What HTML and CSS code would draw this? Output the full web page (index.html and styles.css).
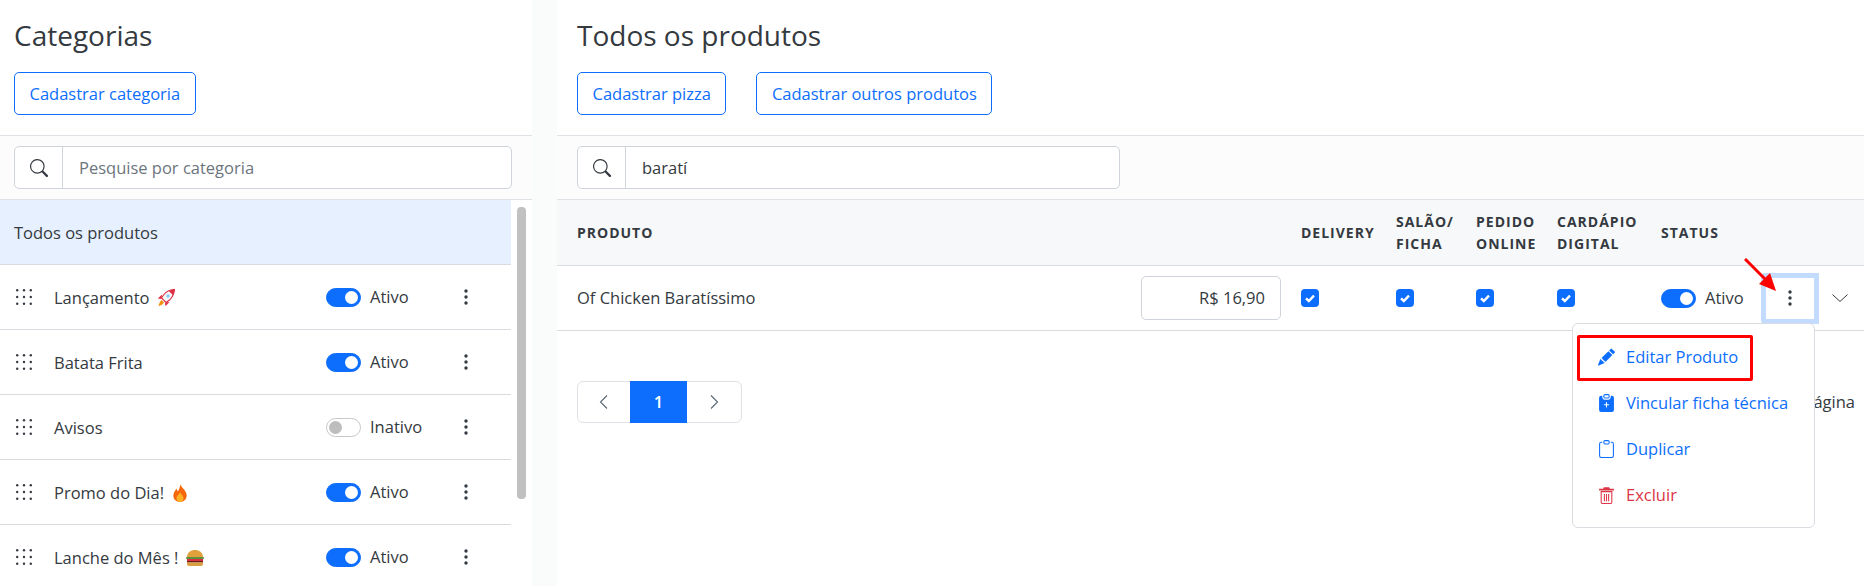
FILE: index.html
```html
<!DOCTYPE html>
<html lang="pt-BR">

<head>
    <meta charset="UTF-8">
    <title>Produtos</title>
    <link rel="stylesheet" href="styles.css">
</head>

<body>
    <svg class="sprite" xmlns="http://www.w3.org/2000/svg">
        <symbol id="i-search" viewBox="0 0 16 16">
            <path d="M11.742 10.344a6.5 6.5 0 1 0-1.397 1.398h-.001c.03.04.062.078.098.115l3.85 3.85a1 1 0 0 0 1.415-1.414l-3.85-3.85a1.007 1.007 0 0 0-.115-.1zM12 6.5a5.5 5.5 0 1 1-11 0 5.5 5.5 0 0 1 11 0z" />
        </symbol>
        <symbol id="i-grip" viewBox="0 0 16 16">
            <circle cx="1.2" cy="1.2" r="1.2" /><circle cx="8" cy="1.2" r="1.2" /><circle cx="14.8" cy="1.2" r="1.2" />
            <circle cx="1.2" cy="8" r="1.2" /><circle cx="8" cy="8" r="1.2" /><circle cx="14.8" cy="8" r="1.2" />
            <circle cx="1.2" cy="14.8" r="1.2" /><circle cx="8" cy="14.8" r="1.2" /><circle cx="14.8" cy="14.8" r="1.2" />
        </symbol>
        <symbol id="i-kebab" viewBox="0 0 4 16">
            <circle cx="2" cy="2" r="1.700" /><circle cx="2" cy="8" r="1.700" /><circle cx="2" cy="14" r="1.700" />
        </symbol>
        <symbol id="i-check" viewBox="0 0 18 18">
            <rect width="18" height="18" rx="4" fill="#0d6efd" />
            <path d="M5 9.4l2.8 2.6L13 6.6" fill="none" stroke="#fff" stroke-width="2.4" />
        </symbol>
    </svg>

    <div class="app">
        <!-- categorias -->
        <aside class="side">
            <div class="top">
                <h3>Categorias</h3>
                <div class="actions">
                    <a href="#" class="btn">Cadastrar categoria</a>
                </div>
            </div>
            <div class="filter">
                <div class="search">
                    <span class="search-ico"><svg><use href="#i-search" /></svg></span>
                    <input type="text" placeholder="Pesquise por categoria">
                </div>
            </div>
            <div class="list-wrap">
                <ul class="list">
                    <li class="cat cat-all"><span class="cat-label">Todos os produtos</span></li>
                    <li class="cat">
                        <svg class="grip"><use href="#i-grip" /></svg>
                        <span class="cat-name">Lançamento
                            <svg class="emoji" viewBox="0 0 18 18">
                                <path d="M17.500.5c-4.500.2-8 2-10.500 5L4.500 9l4.500 4.500 3.500-2.500c3-2.700 4.500-6 5-10.500z" fill="#f5f8fa" stroke="#dd2e44" stroke-width="1.100" />
                                <path d="M17.500.5c-2.200.1-4 .6-5.700 1.500l4.200 4.200c.8-1.700 1.300-3.500 1.500-5.700z" fill="#dd2e44" />
                                <circle cx="11" cy="7" r="1.700" fill="#88c9f9" />
                                <path d="M5 5.500L.8 9.500l3.700.5zM12.500 13l-4 4.200-.5-3.700z" fill="#dd2e44" />
                                <path d="M4.500 11l2.500 2.500c-1 1.800-3 3-5.500 3.500.5-2.500 1.500-4.500 3-6z" fill="#f4900c" />
                            </svg>
                        </span>
                        <span class="switch on"></span>
                        <span class="state">Ativo</span>
                        <svg class="kebab"><use href="#i-kebab" /></svg>
                    </li>
                    <li class="cat">
                        <svg class="grip"><use href="#i-grip" /></svg>
                        <span class="cat-name">Batata Frita</span>
                        <span class="switch on"></span>
                        <span class="state">Ativo</span>
                        <svg class="kebab"><use href="#i-kebab" /></svg>
                    </li>
                    <li class="cat">
                        <svg class="grip"><use href="#i-grip" /></svg>
                        <span class="cat-name">Avisos</span>
                        <span class="switch"></span>
                        <span class="state">Inativo</span>
                        <svg class="kebab"><use href="#i-kebab" /></svg>
                    </li>
                    <li class="cat">
                        <svg class="grip"><use href="#i-grip" /></svg>
                        <span class="cat-name">Promo do Dia!
                            <svg class="emoji" viewBox="0 0 14 18">
                                <path d="M7 0c.6 3 5.800 5.600 6.600 10.500C14.200 15 11 18 7 18s-7-3-6.600-7C.7 8 2.500 6.500 3.300 4.800 4.200 6 4.500 6.800 4.800 7.500 6 5.500 7.300 3 7 0z" fill="#f4680b" />
                                <path d="M7 8c.5 2 3.500 3.500 3.500 6.300C10.500 16.500 9 18 7 18s-3.500-1.500-3.500-3.700C3.500 11.500 6.500 10.500 7 8z" fill="#fdb022" />
                            </svg>
                        </span>
                        <span class="switch on"></span>
                        <span class="state">Ativo</span>
                        <svg class="kebab"><use href="#i-kebab" /></svg>
                    </li>
                    <li class="cat">
                        <svg class="grip"><use href="#i-grip" /></svg>
                        <span class="cat-name">Lanche do Mês !
                            <svg class="emoji" viewBox="0 0 18 16">
                                <path d="M1 7C1 2.500 5 0 9 0s8 2.500 8 7z" fill="#e0a13c" />
                                <rect x="0" y="7" width="18" height="2" rx="1" fill="#5c913b" />
                                <rect x="1" y="9" width="16" height="2" fill="#dd2e44" />
                                <rect x="1" y="11" width="16" height="1.500" fill="#662113" />
                                <path d="M1 12.500h16V14c0 1-1 2-2 2H3c-1 0-2-1-2-2z" fill="#d99e3f" />
                            </svg>
                        </span>
                        <span class="switch on"></span>
                        <span class="state">Ativo</span>
                        <svg class="kebab"><use href="#i-kebab" /></svg>
                    </li>
                </ul>
                <div class="scroll-track"><div class="scroll-thumb"></div></div>
            </div>
        </aside>

        <!-- produtos -->
        <main class="content">
            <div class="top">
                <h3>Todos os produtos</h3>
                <div class="actions">
                    <a href="#" class="btn">Cadastrar pizza</a>
                    <a href="#" class="btn">Cadastrar outros produtos</a>
                </div>
            </div>
            <div class="filter">
                <div class="search search-prod">
                    <span class="search-ico"><svg><use href="#i-search" /></svg></span>
                    <input type="text" value="baratí">
                </div>
            </div>

            <div class="grid grid-head">
                <div>PRODUTO</div>
                <div>DELIVERY</div>
                <div>SALÃO/<br>FICHA</div>
                <div>PEDIDO<br>ONLINE</div>
                <div>CARDÁPIO<br>DIGITAL</div>
                <div>STATUS</div>
            </div>
            <div class="grid grid-row">
                <div class="prod">
                    <span>Of Chicken Baratíssimo</span>
                    <span class="price">R$ 16,90</span>
                </div>
                <svg class="check"><use href="#i-check" /></svg>
                <svg class="check"><use href="#i-check" /></svg>
                <svg class="check"><use href="#i-check" /></svg>
                <svg class="check"><use href="#i-check" /></svg>
                <div class="status">
                    <span class="switch on"></span>
                    <span class="state">Ativo</span>
                </div>
                <div class="row-end">
                    <span class="more"><svg class="kebab"><use href="#i-kebab" /></svg></span>
                    <svg class="chev" viewBox="0 0 16 16"><path d="M.5 4.500L8 11.500l7.500-7" fill="none" stroke="#343a40" stroke-width="1" /></svg>
                </div>
            </div>

            <div class="foot">
                <div class="pager">
                    <a href="#"><svg viewBox="0 0 16 16"><path d="M11 1.500L4.500 8l6.500 6.500" /></svg></a>
                    <a href="#" class="active">1</a>
                    <a href="#"><svg viewBox="0 0 16 16"><path d="M5 1.500L11.500 8 5 14.500" /></svg></a>
                </div>
                <span class="per-page">ágina</span>
            </div>

            <!-- menu aberto -->
            <ul class="menu">
                <li>
                    <svg viewBox="0 0 16 16"><path d="M12.854.146a.5.5 0 0 0-.707 0L10.500 1.793 14.207 5.500l1.647-1.646a.5.5 0 0 0 0-.708l-3-3zm.646 6.061L9.793 2.500 3.293 9H3.500a.5.5 0 0 1 .5.5v.5h.5a.5.5 0 0 1 .5.5v.5h.5a.5.5 0 0 1 .5.5v.5h.5a.5.5 0 0 1 .5.5v.207l6.500-6.500zm-7.468 7.468A.5.5 0 0 1 6 13.500V13h-.5a.5.5 0 0 1-.5-.5V12h-.5a.5.5 0 0 1-.5-.5V11h-.5a.5.5 0 0 1-.5-.5V10h-.5a.499.499 0 0 1-.175-.032l-.179.178a.5.5 0 0 0-.11.168l-2 5a.5.5 0 0 0 .65.65l5-2a.5.5 0 0 0 .168-.11l.178-.178z" /></svg>
                    Editar Produto
                </li>
                <li>
                    <svg viewBox="0 0 16 16" preserveAspectRatio="none"><path d="M6.500 0A1.500 1.500 0 0 0 5 1.500v1A1.500 1.500 0 0 0 6.500 4h3A1.500 1.500 0 0 0 11 2.500v-1A1.500 1.500 0 0 0 9.500 0h-3Zm3 1a.5.5 0 0 1 .5.5v1a.5.5 0 0 1-.5.5h-3a.5.5 0 0 1-.5-.5v-1a.5.5 0 0 1 .5-.5h3Z" /><path d="M4 1.500H3a2 2 0 0 0-2 2V14a2 2 0 0 0 2 2h10a2 2 0 0 0 2-2V3.500a2 2 0 0 0-2-2h-1v1A2.500 2.500 0 0 1 9.500 5h-3A2.500 2.500 0 0 1 4 2.500v-1Zm4.500 6V9H10a.5.5 0 0 1 0 1H8.500v1.500a.5.5 0 0 1-1 0V10H6a.5.5 0 0 1 0-1h1.500V7.500a.5.5 0 0 1 1 0Z" /></svg>
                    Vincular ficha técnica
                </li>
                <li>
                    <svg viewBox="0 0 16 16" preserveAspectRatio="none"><path d="M4 1.500H3a2 2 0 0 0-2 2V14a2 2 0 0 0 2 2h10a2 2 0 0 0 2-2V3.500a2 2 0 0 0-2-2h-1v1h1a1 1 0 0 1 1 1V14a1 1 0 0 1-1 1H3a1 1 0 0 1-1-1V3.500a1 1 0 0 1 1-1h1v-1z" /><path d="M9.500 1a.5.5 0 0 1 .5.5v1a.5.5 0 0 1-.5.5h-3a.5.5 0 0 1-.5-.5v-1a.5.5 0 0 1 .5-.5h3zm-3-1A1.500 1.500 0 0 0 5 1.500v1A1.500 1.500 0 0 0 6.500 4h3A1.500 1.500 0 0 0 11 2.500v-1A1.500 1.500 0 0 0 9.500 0h-3z" /></svg>
                    Duplicar
                </li>
                <li class="danger">
                    <svg viewBox="0 0 16 16" preserveAspectRatio="none"><path d="M1 2.500h14v1.500H1zM5.500 1h5l.7 1.500H4.800z" /><path d="M2.500 4.500h11V14.500a1.500 1.500 0 0 1-1.500 1.500H4a1.500 1.500 0 0 1-1.500-1.500zm1 1V14.500a.5.5 0 0 0 .5.5h8a.5.5 0 0 0 .5-.5V5.500zM5.500 7h1v6.500h-1zM7.500 7h1v6.500h-1zM9.500 7h1v6.500h-1z" fill-rule="evenodd" /></svg>
                    Excluir
                </li>
            </ul>

            <!-- marcacoes do print -->
            <div class="mark-box"></div>
            <svg class="mark-arrow" viewBox="0 0 34 34">
                <path d="M1 1L24 24" stroke="#f00" stroke-width="3" fill="none" />
                <path d="M32 33L15 26L26 15z" fill="#f00" />
            </svg>
        </main>
    </div>
</body>

</html>
```

FILE: styles.css
```css
* {
    box-sizing: border-box;
}

html,
body {
    margin: 0;
    padding: 0;
    height: 586px;
    overflow: hidden;
}

body {
    font: 16.5px/1.5 "Open Sans", "Noto Sans", sans-serif;
    color: #343a40;
    background: #fafbfb;
}

ul {
    list-style: none;
    margin: 0;
    padding: 0;
}

a {
    text-decoration: none;
}

.sprite {
    display: none;
}

.app {
    display: flex;
    gap: 25px;
    height: 586px;
}

.side {
    width: 532px;
    flex: none;
    background: #fff;
}

.content {
    flex: 1;
    position: relative;
    background: #fff;
}

/* topo com titulo e botoes */
.top {
    height: 136px;
    padding: 16px 14px 0;
    border-bottom: 1px solid #dee2e6;
}

.content .top {
    padding-left: 20px;
}

h3 {
    margin: 0 0 18px;
    font-size: 28px;
    font-weight: 400;
    line-height: 38px;
}

.actions {
    display: flex;
    gap: 30px;
}

.btn {
    display: block;
    height: 43px;
    padding: 0 14.500px;
    line-height: 41px;
    color: #0d6efd;
    border: 1px solid #0d6efd;
    border-radius: 5px;
}

/* busca */
.filter {
    height: 64px;
    padding: 10px 20px 0 14px;
    background: #fcfcfc;
    border-bottom: 1px solid #dee2e6;
}

.content .filter {
    padding-left: 20px;
}

.search {
    display: flex;
    height: 43px;
    background: #fff;
    border: 1px solid #ced4da;
    border-radius: 5px;
}

.search-prod {
    width: 543px;
}

.search-ico {
    width: 48px;
    flex: none;
    display: flex;
    align-items: center;
    justify-content: center;
    border-right: 1px solid #ced4da;
}

.search-ico svg {
    width: 18px;
    height: 18px;
    fill: #343a40;
}

.search input {
    flex: 1;
    min-width: 0;
    padding: 2px 16px 0;
    border: 0;
    outline: none;
    background: none;
    font: inherit;
    color: #343a40;
}

.search input::placeholder {
    color: #6c757d;
    opacity: 1;
}

/* lista de categorias */
.list-wrap {
    display: flex;
}

.list {
    width: 511px;
    flex: none;
}

.cat {
    display: flex;
    align-items: center;
    height: 65px;
    padding-left: 16px;
    border-bottom: 1px solid #d8dbe0;
}

.cat-all {
    padding-left: 14px;
    background: #e6f0fe;
}

.cat-label {
    padding-top: 2px;
}

.grip {
    width: 16px;
    height: 16px;
    margin-right: 22px;
    flex: none;
    fill: #343a40;
}

.cat-name {
    width: 272px;
    flex: none;
    padding-top: 2px;
}

.emoji {
    width: 18px;
    height: 18px;
    margin-left: 3px;
    vertical-align: -3px;
}

.switch {
    display: inline-block;
    position: relative;
    width: 35px;
    height: 19px;
    flex: none;
    background: #fff;
    border: 1px solid #c6c8cb;
    border-radius: 10px;
}

.switch::after {
    content: "";
    position: absolute;
    left: 2px;
    top: 2px;
    width: 13px;
    height: 13px;
    background: #bdbdbd;
    border-radius: 50%;
}

.switch.on {
    background: #0d6efd;
    border-color: #0d6efd;
}

.switch.on::after {
    left: auto;
    right: 2px;
    background: #fff;
}

.state {
    padding-left: 9px;
}

.cat .state {
    width: 103px;
}

.kebab {
    width: 4px;
    height: 16px;
    flex: none;
    fill: #343a40;
}

.scroll-track {
    width: 21px;
    flex: none;
    padding: 7px 6px 0;
}

.scroll-thumb {
    height: 292px;
    background: #c1c1c1;
    border-radius: 4px;
}

/* tabela de produtos */
.grid {
    display: grid;
    grid-template-columns: 724px 95px 80px 81px 104px 100px 1fr;
    align-items: center;
    padding-left: 20px;
    border-bottom: 1px solid #d8dbe0;
}

.grid-head {
    height: 66px;
    font-size: 14px;
    font-weight: 700;
    line-height: 22px;
    letter-spacing: 1px;
    background: #f7f8fa;
}

.grid-row {
    height: 65px;
}

.prod {
    display: flex;
    align-items: center;
    justify-content: space-between;
    padding-right: 20px;
}

.price {
    width: 140px;
    height: 44px;
    padding-right: 15px;
    line-height: 42px;
    text-align: right;
    border: 1px solid #ced4da;
    border-radius: 5px;
}

.check {
    width: 18px;
    height: 18px;
}

.status {
    display: flex;
    align-items: center;
}

.row-end {
    display: flex;
    align-items: center;
}

.more {
    display: flex;
    align-items: center;
    justify-content: center;
    width: 58px;
    height: 51px;
    border: 5px solid #c2dbfe;
    border-radius: 4px 0 0 4px;
}

.chev {
    width: 16px;
    height: 16px;
    margin-left: 13px;
}

/* paginacao */
.foot {
    display: flex;
    align-items: center;
    justify-content: space-between;
    padding: 50px 9px 0 20px;
}

.pager {
    display: flex;
    height: 42px;
    border: 1px solid #dee2e6;
    border-radius: 6px;
}

.pager a {
    display: flex;
    align-items: center;
    justify-content: center;
    width: 54px;
    color: #343a40;
}

.pager a:first-child {
    width: 52px;
}

.pager svg {
    width: 16px;
    height: 16px;
    fill: none;
    stroke: #5a6570;
    stroke-width: 1.100;
}

.pager .active {
    width: 57px;
    margin: -1px 0;
    color: #fff;
    font-weight: 600;
    background: #0d6efd;
}

/* menu aberto */
.menu {
    position: absolute;
    left: 1015px;
    top: 323px;
    width: 243px;
    height: 205px;
    padding: 10px 0 0;
    background: #fff;
    border: 1px solid #d9dce0;
    border-radius: 6px;
}

.menu li {
    display: flex;
    align-items: center;
    height: 46px;
    padding-left: 25px;
    color: #0d6efd;
}

.menu svg {
    width: 17px;
    height: 18px;
    margin-right: 11px;
    fill: currentColor;
}

.menu .danger {
    color: #dc3545;
}

.mark-box {
    position: absolute;
    left: 1020px;
    top: 335px;
    width: 176px;
    height: 46px;
    border: 3px solid #f00;
    border-radius: 2px;
}

.mark-arrow {
    position: absolute;
    left: 1187px;
    top: 258px;
    width: 34px;
    height: 34px;
}
```
